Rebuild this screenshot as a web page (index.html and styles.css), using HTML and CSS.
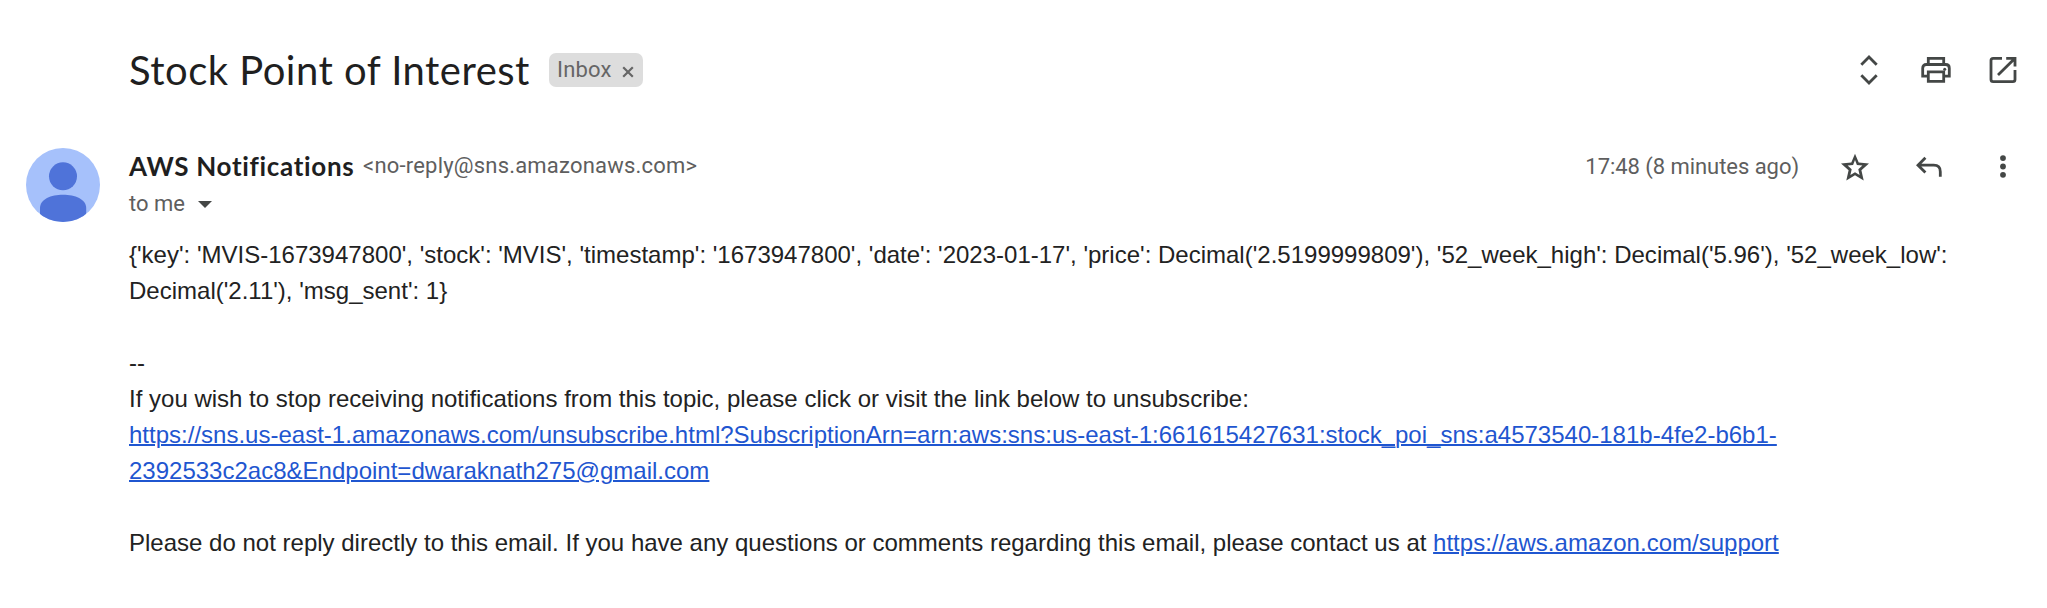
FILE: index.html
```html
<!DOCTYPE html>
<html lang="en">
<head>
<meta charset="utf-8">
<title>Stock Point of Interest</title>
<link rel="stylesheet" href="styles.css">
</head>
<body>
<main class="message">
  <header class="subject-row">
    <h1 class="subject"><span class="subject-text">Stock Point of Interest</span></h1>
    <span class="label"><span class="label-name">Inbox</span>
      <svg class="label-close" viewBox="0 0 12 12"><path d="M1.2 1.2 10.8 10.8M10.8 1.2 1.2 10.8"/></svg>
    </span>
    <nav class="tools">
      <svg class="icon" viewBox="-18 -18 36 36"><path d="M-7.7-5.2 0-12.9 7.7-5.2M-7.7 5.2 0 12.9 7.7 5.2"/></svg>
      <svg class="icon" viewBox="-18 -18 36 36"><path d="M-7.7-5.6V-11.7H7.7V-5.6M-7.7 6.2H-13.3V-1.8Q-13.3-5.5-9.6-5.5H9.6Q13.3-5.5 13.3-1.8V6.2H7.7M-7.7 1.8H7.7V11.3H-7.7Z"/><circle class="fill" cx="8.7" cy="-.8" r="1.5"/></svg>
      <svg class="icon" viewBox="-18 -18 36 36"><path d="M-1-11.7H-9.8Q-12-11.7-12-9.5V9.5Q-12 11.7-9.8 11.7H9.8Q12 11.7 12 9.5V0M3.2-11.7H12V-3.5M12-11.7-5 5"/></svg>
    </nav>
  </header>
  <section class="sender-row">
    <svg class="avatar" viewBox="0 0 74 74">
      <clipPath id="disc"><circle cx="37" cy="37" r="37"/></clipPath>
      <circle class="avatar-bg" cx="37" cy="37" r="37"/>
      <g class="avatar-figure" clip-path="url(#disc)"><circle cx="37" cy="28.3" r="14"/><path d="M14 74V60C14 51 25 46.7 37 46.7S60.2 51 60.2 60V74Z"/></g>
    </svg>
    <div class="sender">
      <div class="from"><span class="name">AWS Notifications</span><span class="address">&lt;no-reply@sns.amazonaws.com&gt;</span></div>
      <div class="to"><span class="to-text">to me</span><svg class="caret" viewBox="0 0 14 7"><path d="M0 0H14L7 7Z"/></svg></div>
    </div>
    <div class="meta">
      <span class="time">17:48 (8 minutes ago)</span>
      <svg class="icon star" viewBox="-18 -18 36 36"><path class="fill" fill-rule="evenodd" d="M0-13.2 3.7-4.5 14-3.6 6.4 3.3 8.7 13.5 0 8.3-8.7 13.5-6.4 3.3-14-3.6-3.7-4.5ZM0-7-1.9-2-7.4-1.5-3.3 2.2-4.6 8 0 5.2 4.6 8 3.3 2.2 7.4-1.5 1.9-2Z"/></svg>
      <svg class="icon reply" viewBox="-18 -18 36 36"><path d="M-3.6-9.2-11-1.8-3.6 5.6M-11-1.8H4.7Q11.3-1.8 11.3 4.7V9.8"/></svg>
      <svg class="icon more" viewBox="-18 -18 36 36"><g class="fill"><circle cy="-8.9" r="2.9"/><circle cy="-.5" r="2.9"/><circle cy="7.8" r="2.9"/></g></svg>
    </div>
  </section>
  <article class="body">
    <p>{'key': 'MVIS-1673947800', 'stock': 'MVIS', 'timestamp': '1673947800', 'date': '2023-01-17', 'price': Decimal('2.5199999809'), '52_week_high': Decimal('5.96'), '52_week_low':<br>Decimal('2.11'), 'msg_sent': 1}</p>
    <p>--<br>If you wish to stop receiving notifications from this topic, please click or visit the link below to unsubscribe:<br><a href="#">https://sns.us-east-1.amazonaws.com/unsubscribe.html?SubscriptionArn=arn:aws:sns:us-east-1:661615427631:stock_poi_sns:a4573540-181b-4fe2-b6b1-<br>2392533c2ac8&amp;Endpoint=dwaraknath275@gmail.com</a></p>
    <p>Please do not reply directly to this email. If you have any questions or comments regarding this email, please contact us at <a href="#">https://aws.amazon.com/support</a></p>
  </article>
</main>
</body>
</html>
```
FILE: styles.css
```css
* { box-sizing: border-box; }
body { margin: 0; background: #fff; color: #222; font-family: "Liberation Sans", Arial, sans-serif; }
.message { height: 608px; overflow: hidden; padding-top: 40px; }
.subject-row { display: flex; align-items: center; height: 60px; padding: 0 26px 0 129px; }
.subject { margin: 0; width: 420px; font: 400 40px/60px Lato, sans-serif; letter-spacing: .48px; color: #1f1f1f; white-space: nowrap; }
.label { display: flex; align-items: center; justify-content: space-between; width: 94px; height: 34px; padding: 0 9px 0 8px; border-radius: 7px; background: #ddd; color: #666; font: 400 22px/34px Roboto, sans-serif; letter-spacing: .2px; }
.label-close { width: 12px; height: 12px; margin-top: 3px; fill: none; stroke: #666; stroke-width: 2.2; }
.tools { display: flex; gap: 31px; margin-left: auto; }
.icon { display: block; flex: none; width: 36px; height: 36px; fill: none; stroke: #444746; stroke-width: 2.8; }
.icon .fill { fill: #444746; stroke: none; }
.sender-row { display: flex; height: 137px; padding: 48px 26px 0; }
.avatar { width: 74px; height: 74px; flex: none; }
.avatar-bg { fill: #a6c1fb; }
.avatar-figure { fill: #4f73d9; }
.sender { margin-left: 29px; white-space: nowrap; }
.from { display: flex; height: 37px; line-height: 36px; }
.name { width: 234px; font: 700 26px/36px Lato, sans-serif; letter-spacing: .68px; color: #1f1f1f; }
.address, .time, .to { font: 400 22px/36px Roboto, sans-serif; color: #5e5e5e; }
.address { letter-spacing: .2px; }
.to { display: flex; align-items: center; gap: 13px; height: 38px; }
.caret { width: 14px; height: 7px; fill: #444746; }
.meta { display: flex; align-items: center; height: 38px; margin-left: auto; }
.time { margin-right: 38px; white-space: nowrap; letter-spacing: -.05px; }
.reply { margin-left: 38px; }
.more { margin-left: 38px; }
.body { padding-left: 129px; font-size: 24px; line-height: 36px; letter-spacing: .006px; white-space: nowrap; }
.body p { margin: 0 0 36px; }
.body a { color: #1f56d0; text-decoration: underline; text-decoration-thickness: 2px; }
```
